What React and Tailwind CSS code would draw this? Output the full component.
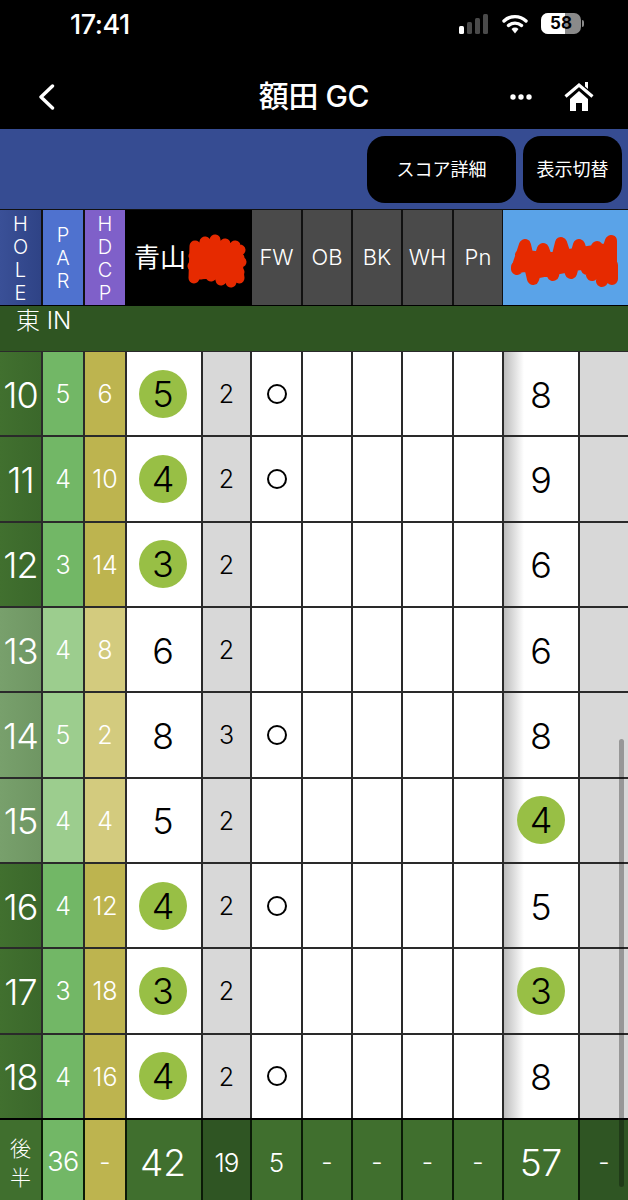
import React from 'react'

const COLS = 'grid grid-cols-[41px_40px_40px_74px_47px_49px_48px_48px_49px_48px_74px_48px] gap-x-[2px]'
const SANS = { fontFamily: '"Inter", "Noto Sans CJK JP", sans-serif' }

const ROWS = [
  { hole: 10, par: 5, hdcp: 6, score: 5, birdie: true, putt: 2, fw: true, other: 8 },
  { hole: 11, par: 4, hdcp: 10, score: 4, birdie: true, putt: 2, fw: true, other: 9 },
  { hole: 12, par: 3, hdcp: 14, score: 3, birdie: true, putt: 2, fw: false, other: 6 },
  { hole: 13, par: 4, hdcp: 8, score: 6, putt: 2, fw: false, other: 6, light: true },
  { hole: 14, par: 5, hdcp: 2, score: 8, putt: 3, fw: true, other: 8, light: true },
  { hole: 15, par: 4, hdcp: 4, score: 5, putt: 2, fw: false, other: 4, otherBirdie: true, light: true },
  { hole: 16, par: 4, hdcp: 12, score: 4, birdie: true, putt: 2, fw: true, other: 5 },
  { hole: 17, par: 3, hdcp: 18, score: 3, birdie: true, putt: 2, fw: false, other: 3, otherBirdie: true },
  { hole: 18, par: 4, hdcp: 16, score: 4, birdie: true, putt: 2, fw: true, other: 8 },
]

function StatusBar() {
  return (
    <div className="h-[64px] flex items-start justify-between pl-[70px] pr-[44px] pt-[8px] bg-black text-white">
      <span className="text-[27px] leading-[33px] font-medium tracking-[-0.5px]">17:41</span>
      <div className="flex items-center gap-[13px] pt-[5px]">
        <svg width="30" height="20" viewBox="0 0 30 20">
          <rect x="0" y="12" width="5" height="8" rx="1.5" fill="#fff" />
          <rect x="8" y="8" width="5" height="12" rx="1.5" fill="#4a4a4a" />
          <rect x="16" y="4" width="5" height="16" rx="1.5" fill="#4a4a4a" />
          <rect x="24" y="0" width="5" height="20" rx="1.5" fill="#4a4a4a" />
        </svg>
        <svg width="26" height="20" viewBox="0 0 26 20">
          <path d="M2 7 A16 16 0 0 1 24 7" fill="none" stroke="#fff" strokeWidth="3.4" strokeLinecap="round" />
          <path d="M6.5 11.5 A10 10 0 0 1 19.5 11.5" fill="none" stroke="#fff" strokeWidth="3.4" strokeLinecap="round" />
          <path d="M9.5 15 L13 19.5 L16.5 15 A5 5 0 0 0 9.5 15 Z" fill="#fff" />
        </svg>
        <div className="flex items-center gap-[1px]">
          <div className="relative w-[40px] h-[21px] rounded-[7px] bg-[#8a8a8a] overflow-hidden">
            <div className="h-full w-[24px] bg-white" />
            <span className="absolute inset-0 flex items-center justify-center text-[17px] leading-[21px] font-bold text-black">58</span>
          </div>
          <div className="w-[2px] h-[7px] rounded-r-full bg-[#8a8a8a]" />
        </div>
      </div>
    </div>
  )
}

function NavBar() {
  return (
    <div className="h-[65px] flex items-center bg-black text-white">
      <div className="w-[115px] pl-[38px]">
        <svg width="17" height="26" viewBox="0 0 17 26">
          <path d="M14.5 2 L3 13 L14.5 24" fill="none" stroke="#fff" strokeWidth="3.4" strokeLinecap="round" strokeLinejoin="round" />
        </svg>
      </div>
      <div className="flex-1 text-center text-[30px] font-medium tracking-[-0.4px] pl-[3px]">額田 GC</div>
      <div className="w-[118px] flex items-center gap-[32px]">
        <svg width="22" height="6" viewBox="0 0 22 6">
          <circle cx="3" cy="3" r="2.7" fill="#fff" />
          <circle cx="11" cy="3" r="2.7" fill="#fff" />
          <circle cx="19" cy="3" r="2.7" fill="#fff" />
        </svg>
        <svg width="30" height="29" viewBox="0 0 30 29">
          <path d="M1.5 14.5 L15 3 L28.5 14.5" fill="none" stroke="#fff" strokeWidth="3.2" />
          <path d="M21 0 h3 v7 l-3 -2.5 Z" fill="#fff" />
          <path d="M6 17 L15 9 L24 17 V29 H18 V21 H12 V29 H6 Z" fill="#fff" />
        </svg>
      </div>
    </div>
  )
}

function Toolbar() {
  return (
    <div className="h-[80px] flex items-start justify-end gap-[7px] pt-[7px] pr-[6px] bg-[#364c92] text-white text-[18px]">
      <button className="w-[149px] h-[67px] rounded-[18px] bg-black">スコア詳細</button>
      <button className="w-[99px] h-[67px] rounded-[18px] bg-black">表示切替</button>
    </div>
  )
}

function Stacked({ letters, className }) {
  return (
    <div className={`flex flex-col items-center justify-center pt-[2px] text-[20px] leading-[23px] font-light text-white ${className}`}>
      {letters.split('').map((l, i) => <span key={i}>{l}</span>)}
    </div>
  )
}

function Head({ children }) {
  return <div className="bg-[#4a4a4a] flex items-center justify-center text-white text-[22px] font-light">{children}</div>
}

function HeaderRow() {
  return (
    <div className={`${COLS} h-[96px] bg-[#111] pt-[1px]`}>
      <Stacked letters="HOLE" className="bg-gradient-to-r from-[#3a5097] to-[#2f4386]" />
      <Stacked letters="PAR" className="bg-[#4f72cf]" />
      <Stacked letters="HDCP" className="bg-[#7f60c9]" />
      <div className="col-span-2 bg-black -mx-[2px] flex items-center pl-[9px] text-white text-[26px] relative">
        青山
        <svg className="absolute left-[62px] top-[22px]" width="60" height="58" viewBox="0 0 60 58">
          <path d="M7 46 L8 14 L14 42 L18 10 L24 44 L28 8 L34 48 L38 12 L44 50 L48 14 L52 46 M7 24 L53 18 M6 34 L54 30 M8 42 L52 40 M8 16 L52 26" fill="none" stroke="#e62a00" strokeWidth="11" strokeLinecap="round" strokeLinejoin="round" />
        </svg>
      </div>
      <Head>FW</Head>
      <Head>OB</Head>
      <Head>BK</Head>
      <Head>WH</Head>
      <Head>Pn</Head>
      <div className="col-span-2 -ml-[1px] bg-[#5aa3e8] relative">
        <svg className="absolute left-[6px] top-[21px]" width="110" height="60" viewBox="0 0 110 60">
          <path d="M8 38 L16 14 L24 48 L34 18 L44 44 L52 12 L62 42 L70 14 L78 38 L88 16 L94 34 L102 10 L102 38 M8 36 L100 24 M12 24 L92 36 M10 32 L98 18 M24 42 L76 32 M83 44 L90 34 M93 50 L99 36 M103 48 L103 34" fill="none" stroke="#e62a00" strokeWidth="12" strokeLinecap="round" strokeLinejoin="round" />
        </svg>
      </div>
    </div>
  )
}

function Score({ value, birdie }) {
  return (
    <div className="bg-white flex items-center justify-center pr-[2px] text-[36px] font-light text-black">
      {birdie
        ? <span className="w-[48px] h-[48px] rounded-full bg-[#98bf45] flex items-center justify-center">{value}</span>
        : <span className="pt-[2px]">{value}</span>}
    </div>
  )
}

function OtherScore({ value, birdie }) {
  return (
    <div className="relative bg-white flex items-center justify-center text-[36px] font-light text-black">
      <div className="absolute inset-y-0 left-0 w-[20px] bg-gradient-to-r from-[#bdbdbd] to-white" />
      {birdie
        ? <span className="relative w-[48px] h-[48px] rounded-full bg-[#98bf45] flex items-center justify-center">{value}</span>
        : <span className="relative pt-[2px]">{value}</span>}
    </div>
  )
}

function HoleRow({ row }) {
  const holeBg = row.light ? 'from-[#78a06c] to-[#6f9663]' : 'from-[#41702f] to-[#3b682b]'
  const parBg = row.light ? 'bg-[#9ccd8e]' : 'bg-[#72b766]'
  const hdcpBg = row.light ? 'bg-[#d3cb7e]' : 'bg-[#bdb44f]'
  return (
    <div className={`${COLS} h-[83.33px] text-white font-light`}>
      <div className={`bg-gradient-to-r ${holeBg} flex items-center justify-center pt-[2px] text-[36px] tracking-[-1px]`}>{row.hole}</div>
      <div className={`${parBg} flex items-center justify-center pt-[2px] text-[25px]`}>{row.par}</div>
      <div className={`${hdcpBg} flex items-center justify-center pt-[2px] text-[25px]`}>{row.hdcp}</div>
      <Score value={row.score} birdie={row.birdie} />
      <div className="bg-[#d8d8d8] flex items-center justify-center pt-[2px] text-[25px] text-black">{row.putt}</div>
      <div className="bg-white flex items-center justify-center">
        {row.fw && <span className="w-[20px] h-[20px] rounded-full border-2 border-black" />}
      </div>
      <div className="bg-white" />
      <div className="bg-white" />
      <div className="bg-white" />
      <div className="bg-white" />
      <OtherScore value={row.other} birdie={row.otherBirdie} />
      <div className="bg-[#d8d8d8]" />
    </div>
  )
}

function Dash() {
  return <div className="bg-[#406f2e] flex items-center justify-center pt-[5px] text-[25px]">-</div>
}

function TotalRow() {
  return (
    <div className={`${COLS} h-[80px] bg-[#0b1a07] text-white font-light mt-[2px]`}>
      <div className="bg-[#406f2e] flex flex-col items-center justify-center pt-[6px] text-[21px] leading-[29px]">
        <span>後</span>
        <span>半</span>
      </div>
      <div className="bg-[#72b766] flex items-center justify-center pt-[5px] text-[27px] tracking-[-0.5px]">36</div>
      <div className="bg-[#bdb44f] flex items-center justify-center pt-[5px] text-[25px]">-</div>
      <div className="bg-[#406f2e] flex items-center justify-center pr-[2px] pt-[5px] text-[37px]">42</div>
      <div className="bg-[#2f5523] flex items-center justify-center pt-[5px] text-[26px] tracking-[-1px]">19</div>
      <div className="bg-[#406f2e] flex items-center justify-center pt-[5px] text-[26px]">5</div>
      <Dash />
      <Dash />
      <Dash />
      <Dash />
      <div className="bg-[#406f2e] flex items-center justify-center pt-[5px] text-[37px]">57</div>
      <div className="bg-[#2f5523] flex items-center justify-center pt-[5px] text-[25px]">-</div>
    </div>
  )
}

export default function App() {
  return (
    <div className="relative w-[628px] h-[1200px] overflow-hidden bg-black" style={SANS}>
      <StatusBar />
      <NavBar />
      <Toolbar />
      <HeaderRow />
      <div className="h-[45px] bg-[#2f5522] text-white text-[24px] leading-[30px] font-light pl-[16px] mt-[1px]">東 IN</div>
      <div className="flex flex-col gap-y-[2px] bg-[#2a2a2a] pt-[1px]">
        {ROWS.map(row => <HoleRow key={row.hole} row={row} />)}
      </div>
      <TotalRow />
      {/* scrollbar */}
      <div className="absolute left-[619px] top-[739px] w-[5px] h-[448px] rounded-full bg-black/30" />
    </div>
  )
}
